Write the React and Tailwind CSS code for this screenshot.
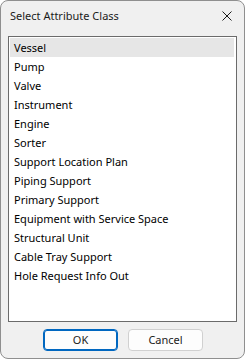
import React from "react";

const items = [
  "Vessel",
  "Pump",
  "Valve",
  "Instrument",
  "Engine",
  "Sorter",
  "Support Location Plan",
  "Piping Support",
  "Primary Support",
  "Equipment with Service Space",
  "Structural Unit",
  "Cable Tray Support",
  "Hole Request Info Out",
];

const App = () => {
  return (
    <div
      className="w-[245px] h-[359px] rounded-[8px] border border-[#8f8f8f] bg-[#f0f0f0] flex flex-col text-[11px] text-[#000] overflow-hidden"
      style={{ fontFamily: '"Segoe UI", "Noto Sans", sans-serif' }}
    >
      {/* Title bar */}
      <div className="h-[30px] flex items-center justify-between pl-[9px] pr-[12px]">
        <span className="text-[11px] text-[#1b1b1b]">Select Attribute Class</span>
        <svg width="10" height="10" viewBox="0 0 10 10" className="text-[#1b1b1b]">
          <path d="M0.5 0.5 L9.5 9.5 M9.5 0.5 L0.5 9.5" stroke="currentColor" strokeWidth="1" fill="none" />
        </svg>
      </div>

      {/* List */}
      <div className="mt-[5px] mx-[7px] h-[286px] border border-[#6b6b6b] bg-white pt-[1px] pl-[1px] pr-[2px]">
        {items.map((item, i) => (
          <div
            key={item}
            className={`h-[19px] flex items-center pl-[4px] leading-none ${
              i === 0 ? "bg-[#e6e6e6]" : ""
            }`}
          >
            {item}
          </div>
        ))}
      </div>

      {/* Buttons */}
      <div className="mt-[7px] flex justify-center gap-[10px] pl-[1px]">
        <button className="w-[75px] h-[22px] rounded-[4px] border border-[#0067c0] bg-[#fdfdfd] text-[11px] text-[#1b1b1b] shadow-[inset_0_0_0_1px_#0067c0]">
          OK
        </button>
        <button className="w-[75px] h-[22px] rounded-[4px] border border-[#d0d0d0] bg-[#fdfdfd] text-[11px] text-[#1b1b1b]">
          Cancel
        </button>
      </div>
    </div>
  );
};

export default App;
